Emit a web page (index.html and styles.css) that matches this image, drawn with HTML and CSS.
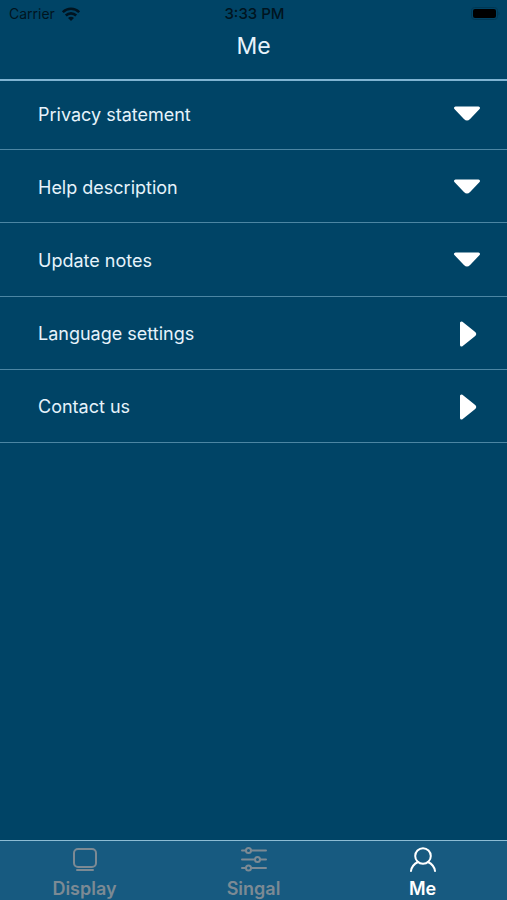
FILE: index.html
```html
<!DOCTYPE html>
<html lang="en">
<head>
<meta charset="utf-8">
<meta name="viewport" content="width=device-width, initial-scale=1">
<title>Me</title>
<link rel="stylesheet" href="styles.css">
</head>
<body>
<header class="header">
  <div class="status">
    <div class="carrier">
      <span>Carrier</span>
      <svg width="18" height="14" viewBox="0 0 18 14" fill="none" stroke="currentColor" stroke-width="2.6" aria-hidden="true">
        <path d="M.8 5.200C5.300.6 12.700.6 17.200 5.200"/>
        <path d="M3.800 8.500c3-2.900 7.400-2.900 10.400 0"/>
        <path d="M9 14 6 10.900c1.800-1.500 4.200-1.500 6 0z" fill="currentColor" stroke="none"/>
      </svg>
    </div>
    <time class="clock">3:33 PM</time>
    <svg class="battery" width="29" height="13" viewBox="0 0 29 13" aria-hidden="true">
      <rect x=".5" y=".5" width="26" height="12" rx="3" fill="none" stroke="#003854"/>
      <rect x="2" y="2" width="23" height="9" rx="2" fill="#000"/>
      <path d="M27.500 4.500q2 2 0 4z" fill="#003854"/>
    </svg>
  </div>
  <h1 class="title">Me</h1>
</header>
<main class="content">
  <div class="list">
    <button class="row" type="button">Privacy statement<svg class="arrow" viewBox="0 0 28 28" aria-hidden="true"><path d="M2.500 8h23L16 18q-2 2-4 0z"/></svg></button>
    <button class="row" type="button">Help description<svg class="arrow" viewBox="0 0 28 28" aria-hidden="true"><path d="M2.500 8h23L16 18q-2 2-4 0z"/></svg></button>
    <button class="row" type="button">Update notes<svg class="arrow" viewBox="0 0 28 28" aria-hidden="true"><path d="M2.500 8h23L16 18q-2 2-4 0z"/></svg></button>
    <button class="row" type="button">Language settings<svg class="arrow" viewBox="0 0 28 28" aria-hidden="true"><path d="M8.500 3v22L21 15q1.500-1 0-2z"/></svg></button>
    <button class="row" type="button">Contact us<svg class="arrow" viewBox="0 0 28 28" aria-hidden="true"><path d="M8.500 3v22L21 15q1.500-1 0-2z"/></svg></button>
  </div>
</main>
<nav class="tabs">
  <a class="tab" href="#display">
    <svg class="icon" viewBox="0 0 28 28" aria-hidden="true"><rect x="3" y="4" width="22" height="18" rx="4"/><path d="M6 25h16"/></svg>
    Display
  </a>
  <a class="tab" href="#signal">
    <svg class="icon" viewBox="0 0 28 28" aria-hidden="true"><path d="M2 5.500h4m5 0h15M2 14.500h13m5 0h6M2 23h4m5 0h15"/><circle cx="8.500" cy="5.500" r="2.500"/><circle cx="17.500" cy="14.500" r="2.500"/><circle cx="8.500" cy="23" r="2.500"/></svg>
    Singal
  </a>
  <a class="tab active" href="#me" aria-current="page">
    <svg class="icon" viewBox="0 0 28 28" aria-hidden="true"><circle cx="14" cy="11" r="7.800"/><path d="M2 26c.5-4 3-7 7-9M26 26c-.5-4-3-7-7-9"/></svg>
    Me
  </a>
</nav>
</body>
</html>
```
FILE: styles.css
```css
* {
  box-sizing: border-box;
}

body {
  margin: 0;
  min-height: 100vh;
  display: flex;
  flex-direction: column;
  background: #004466;
  color: #e6f3fb;
  font-family: Inter, "Liberation Sans", sans-serif;
}

.header {
  border-bottom: 2px solid #7fb4d2;
}

.status {
  display: grid;
  grid-template-columns: 1fr auto 1fr;
  align-items: center;
  height: 27px;
  padding: 0 7px 0 9px;
  color: #001420;
  font-size: 14px;
}

.carrier {
  display: flex;
  align-items: center;
  gap: 7px;
}

.clock {
  font-size: 15px;
  font-weight: 500;
}

.battery {
  justify-self: end;
}

.title {
  margin: 0;
  padding-bottom: 14px;
  font-size: 23px;
  line-height: 38px;
  font-weight: 400;
  text-align: center;
}

.content {
  flex: 1;
}

/* The first row tucks slightly under the header rule. */
.list {
  display: grid;
  grid-auto-rows: 1fr;
  height: 366px;
  margin-top: -4px;
}

.row {
  display: flex;
  align-items: center;
  justify-content: space-between;
  padding: 2px 26px 0 38px;
  border: 0;
  border-bottom: 1px solid #4c86a3;
  background: none;
  color: inherit;
  font: inherit;
  font-size: 18px;
  text-align: left;
}

.arrow {
  width: 28px;
  height: 28px;
  fill: #fff;
  stroke: #fff;
  stroke-width: 3;
  stroke-linejoin: round;
}

.tabs {
  display: grid;
  grid-template-columns: repeat(3, 1fr);
  height: 60px;
  border-top: 1px solid #8dbcd4;
  background: #175a80;
}

.tab {
  display: flex;
  flex-direction: column;
  align-items: center;
  padding-top: 4px;
  color: #7c8a94;
  font-size: 18px;
  line-height: 32px;
  font-weight: 600;
  text-decoration: none;
}

.active {
  color: #fff;
}

.icon {
  width: 28px;
  height: 28px;
  flex: none;
  fill: none;
  stroke: currentColor;
  stroke-width: 2;
  stroke-linecap: round;
}
```
